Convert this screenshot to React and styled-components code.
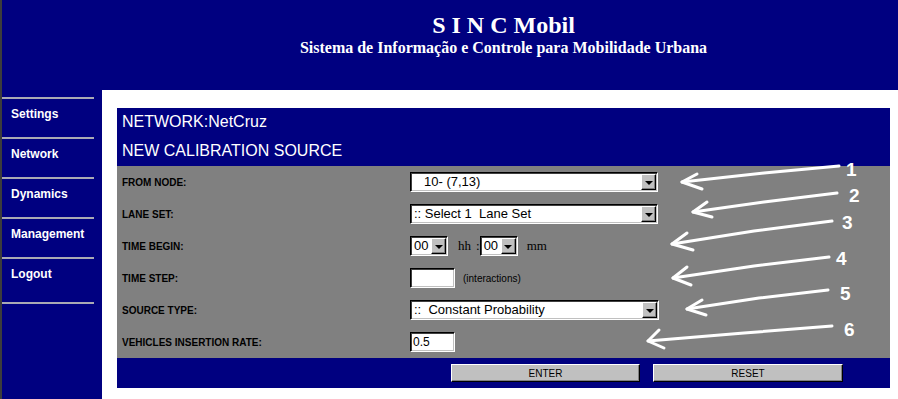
import React from 'react';
import styled, { createGlobalStyle } from 'styled-components';

const GlobalStyle = createGlobalStyle`
  html, body {
    margin: 0;
    padding: 0;
    background: #ffffff;
  }
  * {
    box-sizing: border-box;
  }
`;

const NAVY = '#000080';

const Page = styled.div`
  position: relative;
  display: flex;
  width: 898px;
  height: 399px;
  overflow: hidden;
  background: ${NAVY};
  border-left: 2px solid #3c3c3c;
`;

const Sidebar = styled.div`
  width: 100px;
  flex-shrink: 0;
  padding-top: 97px;
  background: ${NAVY};
`;

const NavRule = styled.div`
  width: 92px;
  height: 2px;
  background: #a9a9b4;
`;

const NavItem = styled.div`
  height: ${(p) => (p.$tall ? 43 : 38)}px;
  padding: 8px 0 0 9px;
  font-family: 'Liberation Sans', Arial, sans-serif;
  font-size: 12px;
  line-height: 14px;
  font-weight: bold;
  color: #ffffff;
`;

const Main = styled.div`
  flex: 1;
  display: flex;
  flex-direction: column;
`;

const Header = styled.div`
  height: 90px;
  padding: 12px 0 0 7px;
  text-align: center;
  font-family: 'Liberation Serif', 'Times New Roman', serif;
  font-weight: bold;
  color: #ffffff;
`;

const Title = styled.div`
  font-size: 24px;
  line-height: 26px;
`;

const Subtitle = styled.div`
  font-size: 16px;
  line-height: 20px;
`;

const Content = styled.div`
  flex: 1;
  background: #ffffff;
  padding: 18px 8px 0 15px;
`;

const Panel = styled.div`
  display: flex;
  flex-direction: column;
  font-family: 'Liberation Sans', Arial, sans-serif;
`;

const PanelTitle = styled.div`
  height: ${(p) => p.$h}px;
  padding: ${(p) => p.$pt}px 0 0 5px;
  background: ${NAVY};
  color: #ffffff;
  font-size: 16px;
  line-height: 18px;
`;

const Form = styled.div`
  background: #808080;
`;

const FormRow = styled.div`
  display: grid;
  grid-template-columns: 288px 1fr;
  align-items: center;
  height: 32px;
  padding-left: 5px;
`;

const Label = styled.div`
  font-size: 10px;
  font-weight: bold;
  color: #000000;
`;

const Controls = styled.div`
  display: flex;
  align-items: center;
`;

const Select = styled.div`
  display: flex;
  align-items: center;
  width: ${(p) => p.$w}px;
  height: 20px;
  background: #ffffff;
  border: 1px solid;
  border-color: #000000 #ffffff #ffffff #000000;
  box-shadow: inset 1px 1px 0 #404040, inset -1px -1px 0 #c0c0c0;
  padding: 1px;
`;

const SelectValue = styled.div`
  flex: 1;
  padding-left: ${(p) => p.$indent || 2}px;
  font-size: 13px;
  line-height: 16px;
  color: #000000;
  white-space: pre;
  overflow: hidden;
`;

const ArrowBtn = styled.div`
  width: 15px;
  height: 16px;
  display: flex;
  align-items: center;
  justify-content: center;
  background: #c0c0c0;
  border: 1px solid;
  border-color: #ffffff #000000 #000000 #ffffff;
  box-shadow: inset -1px -1px 0 #808080;

  &::after {
    content: '';
    border-left: 4px solid transparent;
    border-right: 4px solid transparent;
    border-top: 4px solid #000000;
    margin-top: 1px;
  }
`;

const Unit = styled.span`
  margin-left: ${(p) => p.$ml}px;
  font-family: 'Liberation Serif', 'Times New Roman', serif;
  font-size: 13px;
  color: #000000;
`;

const TextBox = styled.div`
  width: 45px;
  height: 20px;
  padding: 2px 2px 0;
  background: #ffffff;
  border: 1px solid;
  border-color: #000000 #ffffff #ffffff #000000;
  box-shadow: inset 1px 1px 0 #404040, inset -1px -1px 0 #c0c0c0;
  font-size: 12px;
  line-height: 15px;
  color: #000000;
`;

const Hint = styled.span`
  margin-left: 8px;
  font-size: 10px;
  color: #000000;
`;

const Footer = styled.div`
  display: flex;
  gap: 13px;
  height: 30px;
  padding: 6px 0 0 334px;
  background: ${NAVY};
`;

const Button = styled.div`
  width: ${(p) => p.$w}px;
  height: 18px;
  display: flex;
  align-items: center;
  justify-content: center;
  background: #c0c0c0;
  border: 1px solid;
  border-color: #ffffff #000000 #000000 #ffffff;
  box-shadow: inset -1px -1px 0 #808080;
  font-size: 10px;
  color: #000000;
`;

const Overlay = styled.svg`
  position: absolute;
  left: 0;
  top: 0;
  pointer-events: none;
`;

const Marks = styled.g`
  fill: none;
  stroke: #ffffff;
  stroke-width: 3;
  stroke-linecap: round;
  stroke-linejoin: round;
`;

const MarkNumber = styled.text`
  font-family: 'Liberation Sans', Arial, sans-serif;
  font-size: 19px;
  font-weight: bold;
  fill: #ffffff;
`;

const navItems = ['Settings', 'Network', 'Dynamics', 'Management', 'Logout'];

// arrow annotations, page coordinates
const arrows = [
  { n: '1', tail: [835, 166], mid: [760, 173], tip: [678, 182], up: [693, 174], down: [698, 189], tx: 842, ty: 176 },
  { n: '2', tail: [833, 193], mid: [760, 202], tip: [689, 212], up: [703, 202], down: [708, 217], tx: 845, ty: 202 },
  { n: '3', tail: [828, 221], mid: [750, 231], tip: [668, 244], up: [683, 233], down: [689, 250], tx: 838, ty: 229 },
  { n: '4', tail: [825, 257], mid: [750, 266], tip: [669, 278], up: [683, 267], down: [687, 285], tx: 832, ty: 265 },
  { n: '5', tail: [824, 290], mid: [755, 298], tip: [683, 309], up: [698, 300], down: [702, 315], tx: 836, ty: 300 },
  { n: '6', tail: [828, 326], mid: [740, 333], tip: [644, 341], up: [655, 330], down: [660, 348], tx: 840, ty: 336 },
];

const Annotations = () => (
  <Overlay width="898" height="399" viewBox="-2 0 898 399">
    <Marks>
      {arrows.map((a) => (
        <React.Fragment key={a.n}>
          <polyline points={[a.tail, a.mid, a.tip].map((p) => p.join(',')).join(' ')} />
          <polyline points={[a.up, a.tip, a.down].map((p) => p.join(',')).join(' ')} />
        </React.Fragment>
      ))}
    </Marks>
    {arrows.map((a) => (
      <MarkNumber key={a.n} x={a.tx} y={a.ty}>{a.n}</MarkNumber>
    ))}
  </Overlay>
);

const App = () => {
  return (
    <>
      <GlobalStyle />
      <Page>
        <Sidebar>
          <NavRule />
          {navItems.map((item, i) => (
            <React.Fragment key={item}>
              <NavItem $tall={i === navItems.length - 1}>{item}</NavItem>
              <NavRule />
            </React.Fragment>
          ))}
        </Sidebar>
        <Main>
          <Header>
            <Title>S I N C Mobil</Title>
            <Subtitle>Sistema de Informação e Controle para Mobilidade Urbana</Subtitle>
          </Header>
          <Content>
            <Panel>
              <PanelTitle $h={31} $pt={5}>NETWORK:NetCruz</PanelTitle>
              <PanelTitle $h={27} $pt={3}>NEW CALIBRATION SOURCE</PanelTitle>
              <Form>
                <FormRow>
                  <Label>FROM NODE:</Label>
                  <Controls>
                    <Select $w={248}>
                      <SelectValue $indent={12}>10- (7,13)</SelectValue>
                      <ArrowBtn />
                    </Select>
                  </Controls>
                </FormRow>
                <FormRow>
                  <Label>LANE SET:</Label>
                  <Controls>
                    <Select $w={248}>
                      <SelectValue>:: Select 1  Lane Set</SelectValue>
                      <ArrowBtn />
                    </Select>
                  </Controls>
                </FormRow>
                <FormRow>
                  <Label>TIME BEGIN:</Label>
                  <Controls>
                    <Select $w={38}>
                      <SelectValue>00</SelectValue>
                      <ArrowBtn />
                    </Select>
                    <Unit $ml={10}>hh</Unit>
                    <Unit $ml={5}>:</Unit>
                    <Select $w={38}>
                      <SelectValue>00</SelectValue>
                      <ArrowBtn />
                    </Select>
                    <Unit $ml={9}>mm</Unit>
                  </Controls>
                </FormRow>
                <FormRow>
                  <Label>TIME STEP:</Label>
                  <Controls>
                    <TextBox />
                    <Hint>(interactions)</Hint>
                  </Controls>
                </FormRow>
                <FormRow>
                  <Label>SOURCE TYPE:</Label>
                  <Controls>
                    <Select $w={249}>
                      <SelectValue>::  Constant Probability</SelectValue>
                      <ArrowBtn />
                    </Select>
                  </Controls>
                </FormRow>
                <FormRow>
                  <Label>VEHICLES INSERTION RATE:</Label>
                  <Controls>
                    <TextBox>0.5</TextBox>
                  </Controls>
                </FormRow>
              </Form>
              <Footer>
                <Button $w={189}>ENTER</Button>
                <Button $w={190}>RESET</Button>
              </Footer>
            </Panel>
          </Content>
        </Main>
        <Annotations />
      </Page>
    </>
  );
};

export default App;
